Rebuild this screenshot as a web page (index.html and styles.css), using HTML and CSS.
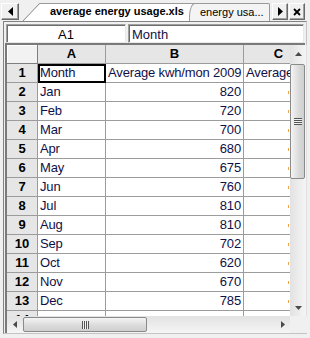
FILE: index.html
```html
<!DOCTYPE html>
<html lang="en">
<head>
    <meta charset="UTF-8">
    <title>average energy usage.xls</title>
    <link rel="stylesheet" href="styles.css">
</head>
<body>
    <div class="tabbar">
        <button class="nav-btn nav-btn-wide">
            <svg width="5" height="9" viewBox="0 0 5 9"><path d="M5 0v9L0 4.5z" fill="#000"/></svg>
        </button>
        <div class="tab tab-active">average energy usage.xls</div>
        <div class="tab tab-other">energy usa...</div>
        <button class="nav-btn nav-btn-next">
            <svg width="5" height="9" viewBox="0 0 5 9"><path d="M0 0v9l5-4.5z" fill="#000"/></svg>
        </button>
        <button class="nav-btn">
            <svg width="8" height="8" viewBox="0 0 8 8"><path d="M1 1l6 6M7 1L1 7" stroke="#000" stroke-width="1.8"/></svg>
        </button>
    </div>

    <div class="panel">
        <div class="formula-bar">
            <div class="name-box">A1</div>
            <div class="formula-box">Month</div>
        </div>

        <div class="sheet">
            <div class="cells">
                <div class="cell head corner"></div>
                <div class="cell head">A</div>
                <div class="cell head">B</div>
                <div class="cell head">C</div>

                <div class="cell head">1</div>
                <div class="cell selected">Month</div>
                <div class="cell">Average kwh/mon 2009</div>
                <div class="cell">Average kwh/mon 2010</div>

                <div class="cell head">2</div><div class="cell">Jan</div><div class="cell num">820</div><div class="cell peek"></div>
                <div class="cell head">3</div><div class="cell">Feb</div><div class="cell num">720</div><div class="cell peek"></div>
                <div class="cell head">4</div><div class="cell">Mar</div><div class="cell num">700</div><div class="cell peek"></div>
                <div class="cell head">5</div><div class="cell">Apr</div><div class="cell num">680</div><div class="cell peek"></div>
                <div class="cell head">6</div><div class="cell">May</div><div class="cell num">675</div><div class="cell peek"></div>
                <div class="cell head">7</div><div class="cell">Jun</div><div class="cell num">760</div><div class="cell peek"></div>
                <div class="cell head">8</div><div class="cell">Jul</div><div class="cell num">810</div><div class="cell peek"></div>
                <div class="cell head">9</div><div class="cell">Aug</div><div class="cell num">810</div><div class="cell peek"></div>
                <div class="cell head">10</div><div class="cell">Sep</div><div class="cell num">702</div><div class="cell peek"></div>
                <div class="cell head">11</div><div class="cell">Oct</div><div class="cell num">620</div><div class="cell peek"></div>
                <div class="cell head">12</div><div class="cell">Nov</div><div class="cell num">670</div><div class="cell peek"></div>
                <div class="cell head">13</div><div class="cell">Dec</div><div class="cell num">785</div><div class="cell peek"></div>
                <div class="cell head">14</div><div class="cell"></div><div class="cell"></div><div class="cell"></div>
            </div>

            <div class="vscroll">
                <div class="arrow">
                    <svg width="7" height="4" viewBox="0 0 7 4"><path d="M0 4h7L3.5 0z" fill="#4a4a4a"/></svg>
                </div>
                <div class="thumb thumb-v"><span class="grip grip-v"></span></div>
                <div class="track"></div>
                <div class="arrow">
                    <svg width="7" height="4" viewBox="0 0 7 4"><path d="M0 0h7L3.5 4z" fill="#4a4a4a"/></svg>
                </div>
            </div>

            <div class="hscroll">
                <div class="arrow arrow-h">
                    <svg width="4" height="7" viewBox="0 0 4 7"><path d="M4 0v7L0 3.5z" fill="#4a4a4a"/></svg>
                </div>
                <div class="thumb thumb-h"><span class="grip grip-h"></span></div>
                <div class="track"></div>
                <div class="arrow arrow-h">
                    <svg width="4" height="7" viewBox="0 0 4 7"><path d="M0 0v7l4-3.5z" fill="#4a4a4a"/></svg>
                </div>
            </div>

            <div class="scroll-corner"></div>
        </div>
    </div>
</body>
</html>
```

FILE: styles.css
```css
* {
    box-sizing: border-box;
}

body {
    margin: 0;
    width: 310px;
    height: 338px;
    overflow: hidden;
    background: #f0f0f0;
    font-family: "Liberation Sans", Arial, sans-serif;
    color: #000;
}

/* tab strip */
.tabbar {
    display: flex;
    align-items: flex-end;
    height: 21px;
}

.nav-btn {
    width: 16px;
    height: 17px;
    margin: 0 0 1px 1px;
    padding: 0;
    display: flex;
    align-items: center;
    justify-content: center;
    background: #f0f0f0;
    border: 1px solid;
    border-color: #fff #696969 #696969 #fff;
    box-shadow: inset -1px -1px #a0a0a0;
}

.nav-btn-wide {
    width: 18px;
}

.nav-btn-next {
    margin-left: 2px;
}

.tab {
    height: 18px;
    font-size: 11px;
    line-height: 17px;
    white-space: nowrap;
}

.tab-active {
    width: 172px;
    margin-left: 4px;
    padding-left: 27px;
    font-weight: bold;
    background:
        linear-gradient(#9a9a9a, #9a9a9a) 16px 0 / 100% 1px no-repeat,
        linear-gradient(to bottom right, #f0f0f0 calc(50% - 0.8px), #8c8c8c 50%, #fff calc(50% + 0.8px)) 0 0 / 17px 100% no-repeat,
        #fff;
}

.tab-other {
    width: 81px;
    margin-left: -6px;
    padding-left: 10px;
    border: 1px solid #9a9a9a;
    border-bottom: none;
    border-top-left-radius: 6px 14px;
    border-top-right-radius: 2px;
    background: #f4f4f4;
}

/* workbook panel */
.panel {
    margin: 0 3px;
    height: 313px;
    padding: 2px 1px 0 1px;
    display: flex;
    flex-direction: column;
    border: 1px solid;
    border-color: #828282 #c4c4c4 #c4c4c4 #828282;
}

.formula-bar {
    display: flex;
    gap: 2px;
    height: 19px;
    padding: 0 1px;
    font-size: 13px;
    line-height: 15px;
}

.name-box,
.formula-box {
    background: #fff;
    border: 1px solid;
    border-color: #a0a0a0 #e8e8e8 #e8e8e8 #a0a0a0;
    box-shadow: inset 1px 1px #6d6d6d;
    padding-top: 2px;
}

.name-box {
    width: 120px;
    text-align: center;
}

.formula-box {
    flex: 1;
    padding-left: 3px;
    color: #101048;
}

.sheet {
    flex: 1;
    display: grid;
    grid-template-columns: 283px 17px;
    grid-template-rows: 271px 17px;
    border-style: solid;
    border-width: 2px 0 0 2px;
    border-color: #7a7a7a;
}

.cells {
    overflow: hidden;
    display: grid;
    grid-template-columns: 31px 68px 138px 70px;
    grid-auto-rows: 19px;
    align-content: start;
    background: #fff;
}

.cell {
    padding: 0 2px;
    font-size: 13px;
    line-height: 18px;
    letter-spacing: -0.15px;
    color: #101048;
    white-space: nowrap;
    overflow: hidden;
    border-right: 1px solid #9c9c9c;
    border-bottom: 1px solid #9c9c9c;
}

.num {
    text-align: right;
}

/* clipped first digit of the hidden column C values */
.peek {
    background: linear-gradient(#f2a248, #f2a248) 44px 8px / 1px 3px no-repeat;
}

.head {
    background: #e6e6e6;
    color: #000;
    font-weight: bold;
    text-align: center;
    letter-spacing: 0;
}

.corner {
    background: #f2f2f2;
    box-shadow: inset 1px 1px #fff;
    border-color: #7e7e7e;
}

.selected {
    outline: 2px solid #000;
    outline-offset: -2px;
}

/* scroll bars */
.vscroll,
.hscroll {
    display: flex;
    background: #f2f2f2;
}

.vscroll {
    flex-direction: column;
    background: linear-gradient(to right, #e2e2e2, #f5f5f5);
    border-right: 1px solid #e0e0e0;
}

.hscroll {
    background: linear-gradient(#e2e2e2, #f5f5f5);
}

.arrow {
    height: 17px;
    display: flex;
    align-items: center;
    justify-content: center;
}

.arrow-h {
    width: 15px;
    height: auto;
}

.track {
    flex: 1;
}

.thumb {
    display: flex;
    align-items: center;
    justify-content: center;
    border: 1px solid #8a8a8a;
    border-radius: 2px;
}

.thumb-v {
    height: 115px;
    margin: 2px 1px 0 0;
    background: linear-gradient(to right, #f4f4f4, #dadada 60%, #cfcfcf);
}

.thumb-h {
    width: 124px;
    margin: 1px 0 1px 1px;
    background: linear-gradient(#f4f4f4, #dadada 60%, #cfcfcf);
}

.grip-v {
    width: 8px;
    height: 7px;
    background: repeating-linear-gradient(#555 0 1px, #f0f0f0 1px 2px);
}

.grip-h {
    width: 7px;
    height: 8px;
    background: repeating-linear-gradient(to right, #555 0 1px, #f0f0f0 1px 2px);
}

.scroll-corner {
    background: #f0f0f0;
}
```
